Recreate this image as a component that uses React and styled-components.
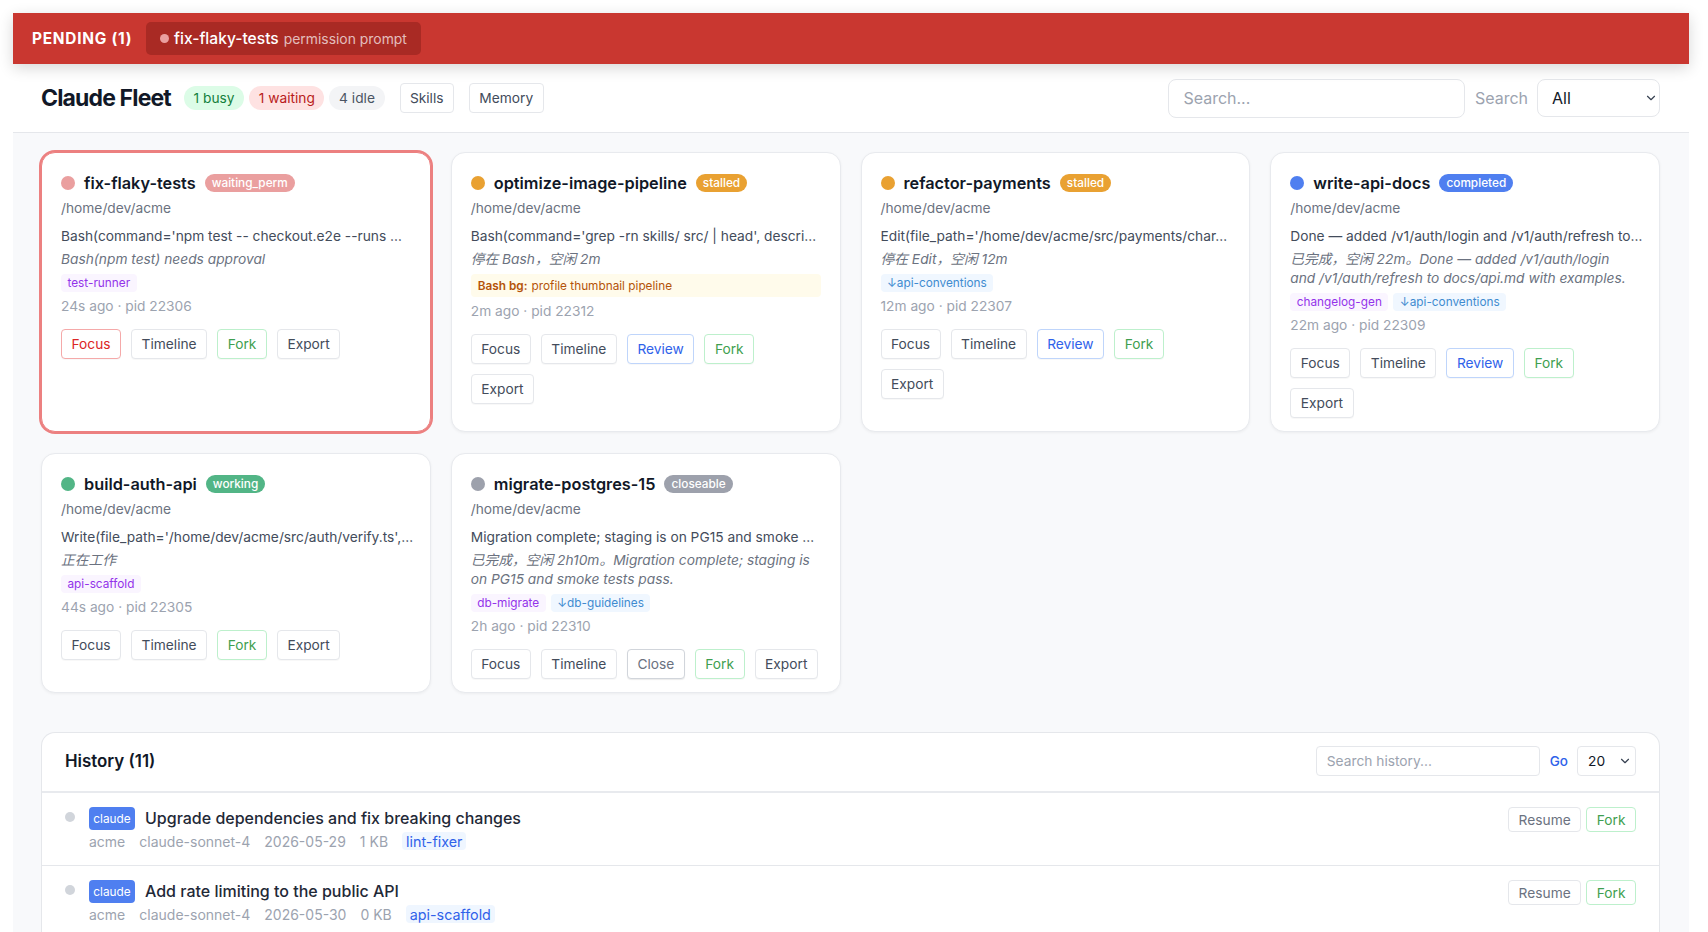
import React from "react";
import styled, { createGlobalStyle } from "styled-components";
import { ChevronDown } from "lucide-react";

const Global = createGlobalStyle`
  html, body { margin: 0; padding: 0; background: #fff; }
  body {
    font-family: Inter, "Noto Sans CJK SC", sans-serif;
    color: #111827;
    overflow: hidden;
  }
  * { box-sizing: border-box; }
`;

const STATUS = {
  waiting_perm: "#ea9f9f",
  stalled: "#e9a132",
  completed: "#4f7ff0",
  working: "#52b586",
  closeable: "#9da1ac",
};

const BUTTON_TONES = {
  plain: "color: #434c5b; border-color: #e5e7eb;",
  focus: "color: #dc2626; border-color: #f5a9a9;",
  review: "color: #2f62ea; border-color: #bfd5fb;",
  fork: "color: #3f9f50; border-color: #bdf0cc;",
  close: "color: #6b7280; border-color: #d1d5db; box-shadow: 0 1px 1px rgba(0,0,0,.08);",
};

const Shell = styled.div`
  height: 100vh;
  padding: 13px 19px 0 13px;
  overflow: hidden;
`;

const AlertBar = styled.div`
  position: relative;
  z-index: 2;
  height: 51px;
  padding: 0 19px;
  display: flex;
  align-items: center;
  gap: 14px;
  background: #c93730;
  color: #fff;
  box-shadow: 0 4px 14px rgba(0, 0, 0, 0.16);
`;

const AlertTitle = styled.div`
  width: 100px;
  font-size: 15.4px;
  font-weight: 700;
  letter-spacing: 0.75px;
  white-space: nowrap;
`;

const AlertPill = styled.div`
  width: 275px;
  height: 33px;
  padding: 0 14px;
  display: flex;
  align-items: center;
  background: #a92a24;
  border-radius: 5px;
`;

const AlertDot = styled.span`
  width: 9px;
  height: 9px;
  margin-right: 5px;
  border-radius: 50%;
  background: #ea9f9f;
`;

const AlertName = styled.span`
  font-size: 15.6px;
  font-weight: 500;
`;

const AlertReason = styled.span`
  margin-left: 5px;
  font-size: 13.9px;
  color: rgba(255, 255, 255, 0.7);
`;

const Header = styled.header`
  height: 69px;
  padding: 0 29px 0 28px;
  display: flex;
  align-items: center;
  background: #fff;
  border-bottom: 1px solid #e5e7eb;
`;

const Title = styled.h1`
  margin: 0 13px 0 0;
  font-size: 23px;
  font-weight: 700;
  letter-spacing: -0.85px;
`;

const Counts = styled.div`
  display: flex;
  gap: 5px;
  margin-right: 15px;
`;

const Count = styled.span`
  height: 24px;
  padding: 0 9.6px;
  display: flex;
  align-items: center;
  border-radius: 12px;
  font-size: 13.75px;
  color: ${(p) => p.$fg};
  background: ${(p) => p.$bg};
`;

const NavButton = styled.button`
  height: 30px;
  margin-right: 15px;
  padding: 0 9.4px;
  background: #fff;
  border: 1px solid #e5e7eb;
  border-radius: 4px;
  font: 400 13.75px Inter, sans-serif;
  color: #434c5b;
`;

const Spacer = styled.div`
  flex: 1;
`;

const SearchInput = styled.input`
  width: 297px;
  height: 39px;
  padding: 0 14.5px;
  background: #fff;
  border: 1px solid #e5e7eb;
  border-radius: 8px;
  font: 400 16px Inter, sans-serif;
  &::placeholder { color: #9ca3af; }
`;

const SearchLabel = styled.span`
  margin: 0 9px 0 10px;
  font-size: 16px;
  color: #9ca3af;
`;

const SelectWrap = styled.div`
  position: relative;
  width: ${(p) => p.$width}px;
  height: ${(p) => p.$height}px;
  display: flex;
  svg {
    position: absolute;
    right: ${(p) => p.$arrow}px;
    top: 50%;
    transform: translateY(-50%);
    pointer-events: none;
  }
`;

const Select = styled.select`
  width: 100%;
  height: 100%;
  padding-left: ${(p) => p.$pad}px;
  appearance: none;
  background: #fff;
  border: 1px solid #e5e7eb;
  border-radius: ${(p) => p.$radius}px;
  font: 400 ${(p) => p.$size}px Inter, sans-serif;
  color: #111827;
`;

const Main = styled.main`
  height: calc(100vh - 133px);
  padding: 19px 29px 0 28px;
  background: #f8f9fb;
`;

const Grid = styled.div`
  display: grid;
  grid-template-columns: repeat(4, minmax(0, 1fr));
  column-gap: 20px;
  row-gap: 21px;
  align-items: stretch;
`;

const Card = styled.article`
  padding: 18px 19px 13px;
  background: #fff;
  border: 1px solid ${(p) => (p.$alert ? "#ec8080" : "#e8eaee")};
  border-radius: 14px;
  box-shadow: ${(p) => (p.$alert ? "0 0 0 2px #ec8080" : "0 1px 3px rgba(0, 0, 0, 0.05)")};
`;

const CardHead = styled.div`
  height: 24px;
  display: flex;
  align-items: center;
`;

const StatusDot = styled.span`
  width: 14px;
  height: 14px;
  margin-right: 9px;
  border-radius: 50%;
  background: ${(p) => p.$color};
`;

const CardName = styled.span`
  font-size: 16.3px;
  font-weight: 600;
  margin-right: 9px;
`;

const StatusBadge = styled.span`
  height: 18px;
  padding: 0 7px;
  display: flex;
  align-items: center;
  border-radius: 9px;
  font-size: 11.8px;
  font-weight: 500;
  color: #fff;
  background: ${(p) => p.$color};
`;

const CardPath = styled.div`
  margin-top: 4px;
  font-size: 13.75px;
  line-height: 19px;
  color: #6b7280;
`;

const ToolLine = styled.div`
  margin-top: 9px;
  font-size: 13.75px;
  line-height: 19px;
  color: #434c5b;
  white-space: nowrap;
`;

const Note = styled.div`
  margin-top: 4px;
  padding-right: 6px;
  font-size: 13.75px;
  line-height: 19px;
  font-style: italic;
  color: #6b7280;
`;

const BgNote = styled.div`
  height: 23px;
  margin-top: 5px;
  padding: 0 7px;
  display: flex;
  align-items: center;
  gap: 4px;
  border-radius: 4px;
  background: #fffbeb;
  font-size: 11.8px;
  color: #b45309;
  b { font-weight: 600; }
`;

const Tags = styled.div`
  margin-top: 5px;
  display: flex;
  gap: 5px;
`;

const Tag = styled.span`
  height: 18px;
  padding: 0 6.5px;
  display: flex;
  align-items: center;
  border-radius: 4px;
  font-size: 11.8px;
  color: ${(p) => (p.$inherited ? "#3f8bd0" : "#9333ea")};
  background: ${(p) => (p.$inherited ? "#f0f7ff" : "#faf5ff")};
`;

const CardMeta = styled.div`
  margin-top: 5px;
  font-size: 13.75px;
  line-height: 19px;
  color: #9ca3af;
`;

const Actions = styled.div`
  margin-top: 13px;
  display: flex;
  flex-wrap: wrap;
  gap: 10px;
`;

const ActionButton = styled.button`
  height: 30px;
  padding: 0 9.5px;
  background: #fff;
  border: 1px solid;
  border-radius: 4px;
  font: 400 13.75px Inter, sans-serif;
  box-shadow: 0 1px 1px rgba(0, 0, 0, 0.03);
  ${(p) => BUTTON_TONES[p.$tone || "plain"]}
`;

const HistoryPanel = styled.section`
  margin-top: 39px;
  background: #fff;
  border: 1px solid #e5e7eb;
  border-radius: 14px 14px 0 0;
  border-bottom: 0;
`;

const HistoryHead = styled.div`
  height: 60px;
  padding: 0 23px 2px;
  display: flex;
  align-items: center;
  border-bottom: 2px solid #e8eaee;
`;

const HistoryTitle = styled.div`
  font-size: 16.9px;
  font-weight: 600;
`;

const HistorySearch = styled.input`
  width: 224px;
  height: 30px;
  padding: 0 10px;
  background: #fff;
  border: 1px solid #e5e7eb;
  border-radius: 4px;
  font: 400 13.75px Inter, sans-serif;
  &::placeholder { color: #9ca3af; }
`;

const GoLink = styled.span`
  margin: 0 9px 0 10px;
  font-size: 13.5px;
  font-weight: 500;
  color: #2f62ea;
`;

const HistoryRow = styled.div`
  height: 73px;
  padding: 14px 23px 0;
  display: flex;
  align-items: flex-start;
  border-bottom: 1px solid #e5e7eb;
`;

const RowDot = styled.span`
  width: 10px;
  height: 10px;
  margin: 5px 14px 0 0;
  flex: none;
  border-radius: 50%;
  background: #d1d5db;
`;

const RowBody = styled.div`
  flex: 1;
`;

const RowTop = styled.div`
  display: flex;
  align-items: center;
  gap: 10px;
`;

const SourceBadge = styled.span`
  height: 23px;
  width: 46px;
  display: flex;
  align-items: center;
  justify-content: center;
  border-radius: 4px;
  background: #4f7ff0;
  color: #fff;
  font-size: 11.8px;
`;

const RowTitle = styled.span`
  padding-bottom: 2px;
  font-size: 16px;
  font-weight: 500;
  color: #1f2937;
`;

const RowMeta = styled.div`
  margin-top: 2px;
  display: flex;
  align-items: center;
  gap: 14px;
  font-size: 14px;
  color: #9ca3af;
`;

const SkillPill = styled.span`
  height: 18px;
  padding: 0 4px;
  display: flex;
  align-items: center;
  border-radius: 4px;
  background: #eff6ff;
  font-size: 14.3px;
  color: #2f62ea;
`;

const RowActions = styled.div`
  display: flex;
  gap: 5px;
`;

const RowButton = styled.button`
  height: 25px;
  padding: 0 9.5px;
  background: #fff;
  border: 1px solid ${(p) => (p.$fork ? "#bdf0cc" : "#e5e7eb")};
  border-radius: 4px;
  font: 400 13.75px Inter, sans-serif;
  color: ${(p) => (p.$fork ? "#3f9f50" : "#6b7280")};
`;

const cards = [
  {
    name: "fix-flaky-tests", status: "waiting_perm", pid: "24s ago · pid 22306", alert: true,
    tool: "Bash(command='npm test -- checkout.e2e --runs …",
    note: "Bash(npm test) needs approval",
    tags: [{ label: "test-runner" }],
    actions: [["Focus", "focus"], ["Timeline"], ["Fork", "fork"], ["Export"]],
  },
  {
    name: "optimize-image-pipeline", status: "stalled", pid: "2m ago · pid 22312",
    tool: "Bash(command='grep -rn skills/ src/ | head', descri…",
    note: "停在 Bash，空闲 2m",
    bg: "profile thumbnail pipeline",
    actions: [["Focus"], ["Timeline"], ["Review", "review"], ["Fork", "fork"], ["Export"]],
  },
  {
    name: "refactor-payments", status: "stalled", pid: "12m ago · pid 22307",
    tool: "Edit(file_path='/home/dev/acme/src/payments/char…",
    note: "停在 Edit，空闲 12m",
    tags: [{ label: "↓api-conventions", inherited: true }],
    actions: [["Focus"], ["Timeline"], ["Review", "review"], ["Fork", "fork"], ["Export"]],
  },
  {
    name: "write-api-docs", status: "completed", pid: "22m ago · pid 22309",
    tool: "Done — added /v1/auth/login and /v1/auth/refresh to…",
    note: "已完成，空闲 22m。Done — added /v1/auth/login and /v1/auth/refresh to docs/api.md with examples.",
    tags: [{ label: "changelog-gen" }, { label: "↓api-conventions", inherited: true }],
    actions: [["Focus"], ["Timeline"], ["Review", "review"], ["Fork", "fork"], ["Export"]],
  },
  {
    name: "build-auth-api", status: "working", pid: "44s ago · pid 22305",
    tool: "Write(file_path='/home/dev/acme/src/auth/verify.ts',…",
    note: "正在工作",
    tags: [{ label: "api-scaffold" }],
    actions: [["Focus"], ["Timeline"], ["Fork", "fork"], ["Export"]],
  },
  {
    name: "migrate-postgres-15", status: "closeable", pid: "2h ago · pid 22310",
    tool: "Migration complete; staging is on PG15 and smoke …",
    note: "已完成，空闲 2h10m。Migration complete; staging is on PG15 and smoke tests pass.",
    tags: [{ label: "db-migrate" }, { label: "↓db-guidelines", inherited: true }],
    actions: [["Focus"], ["Timeline"], ["Close", "close"], ["Fork", "fork"], ["Export"]],
  },
];

const history = [
  { title: "Upgrade dependencies and fix breaking changes", date: "2026-05-29", size: "1 KB", skill: "lint-fixer" },
  { title: "Add rate limiting to the public API", date: "2026-05-30", size: "0 KB", skill: "api-scaffold" },
];

function FleetCard({ card }) {
  const color = STATUS[card.status];
  return (
    <Card $alert={card.alert}>
      <CardHead>
        <StatusDot $color={color} />
        <CardName>{card.name}</CardName>
        <StatusBadge $color={color}>{card.status}</StatusBadge>
      </CardHead>
      <CardPath>/home/dev/acme</CardPath>
      <ToolLine>{card.tool}</ToolLine>
      <Note>{card.note}</Note>
      {card.bg && <BgNote><b>Bash bg:</b> {card.bg}</BgNote>}
      {card.tags && (
        <Tags>
          {card.tags.map((tag) => (
            <Tag key={tag.label} $inherited={tag.inherited}>{tag.label}</Tag>
          ))}
        </Tags>
      )}
      <CardMeta>{card.pid}</CardMeta>
      <Actions>
        {card.actions.map(([label, tone]) => (
          <ActionButton key={label} $tone={tone}>{label}</ActionButton>
        ))}
      </Actions>
    </Card>
  );
}

export default function App() {
  return (
    <Shell>
      <Global />
      <AlertBar>
        <AlertTitle>PENDING (1)</AlertTitle>
        <AlertPill>
          <AlertDot />
          <AlertName>fix-flaky-tests</AlertName>
          <AlertReason>permission prompt</AlertReason>
        </AlertPill>
      </AlertBar>
      <Header>
        <Title>Claude Fleet</Title>
        <Counts>
          <Count $fg="#15803d" $bg="#dcfce7">1 busy</Count>
          <Count $fg="#b91c1c" $bg="#fee2e2">1 waiting</Count>
          <Count $fg="#4b5563" $bg="#f3f4f6">4 idle</Count>
        </Counts>
        <NavButton>Skills</NavButton>
        <NavButton>Memory</NavButton>
        <Spacer />
        <SearchInput placeholder="Search..." />
        <SearchLabel>Search</SearchLabel>
        <SelectWrap $width={123} $height={38} $arrow={2}>
          <Select $pad={14} $radius={8} $size={16} defaultValue="All">
            <option>All</option>
          </Select>
          <ChevronDown size={14} color="#374151" />
        </SelectWrap>
      </Header>
      <Main>
        <Grid>
          {cards.map((card) => (
            <FleetCard key={card.name} card={card} />
          ))}
        </Grid>
        <HistoryPanel>
          <HistoryHead>
            <HistoryTitle>History (11)</HistoryTitle>
            <Spacer />
            <HistorySearch placeholder="Search history..." />
            <GoLink>Go</GoLink>
            <SelectWrap $width={59} $height={30} $arrow={4}>
              <Select $pad={10} $radius={4} $size={13.75} defaultValue="20">
                <option>20</option>
              </Select>
              <ChevronDown size={14} color="#374151" />
            </SelectWrap>
          </HistoryHead>
          {history.map((row) => (
            <HistoryRow key={row.title}>
              <RowDot />
              <RowBody>
                <RowTop>
                  <SourceBadge>claude</SourceBadge>
                  <RowTitle>{row.title}</RowTitle>
                </RowTop>
                <RowMeta>
                  <span>acme</span>
                  <span>claude-sonnet-4</span>
                  <span>{row.date}</span>
                  <span>{row.size}</span>
                  <SkillPill>{row.skill}</SkillPill>
                </RowMeta>
              </RowBody>
              <RowActions>
                <RowButton>Resume</RowButton>
                <RowButton $fork>Fork</RowButton>
              </RowActions>
            </HistoryRow>
          ))}
        </HistoryPanel>
      </Main>
    </Shell>
  );
}
